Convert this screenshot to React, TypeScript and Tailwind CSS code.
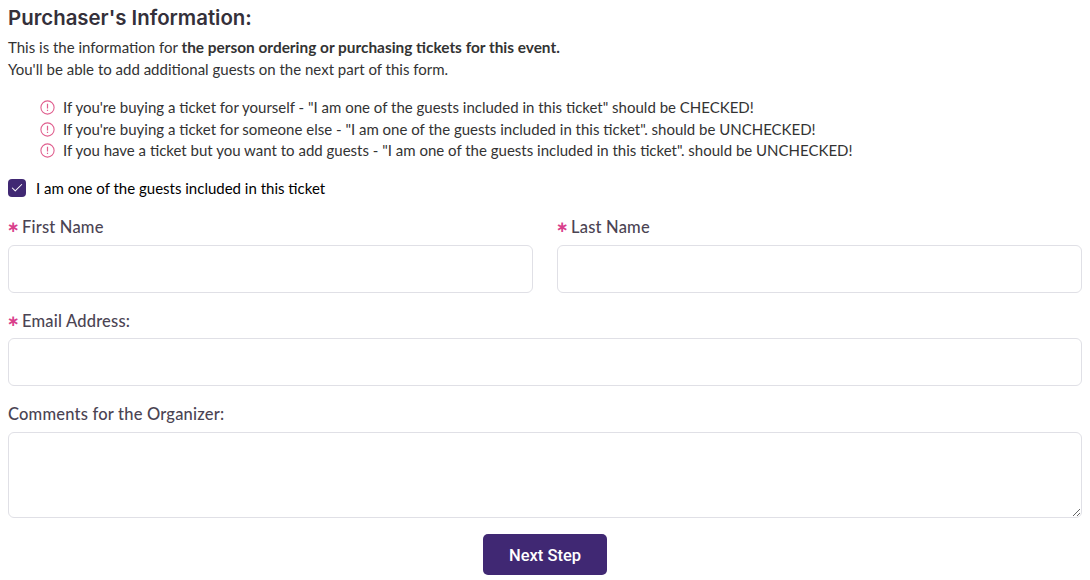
import { Check } from "lucide-react";

const notes = [
  `If you're buying a ticket for yourself - "I am one of the guests included in this ticket" should be CHECKED!`,
  `If you're buying a ticket for someone else - "I am one of the guests included in this ticket". should be UNCHECKED!`,
  `If you have a ticket but you want to add guests - "I am one of the guests included in this ticket". should be UNCHECKED!`,
];

function Alert() {
  return (
    <svg width="15" height="15" viewBox="0 0 15 15" fill="none" className="shrink-0">
      <circle cx="7.5" cy="7.5" r="6.6" stroke="#e0608f" strokeWidth="1.1" />
      <path d="M7.5 3.8v4.6M7.5 9.8v1.2" stroke="#e0608f" strokeWidth="1.2" />
    </svg>
  );
}

function Label({ text, required }: { text: string; required?: boolean }) {
  return (
    <div className="flex items-center h-[20px] text-[16.5px] tracking-[0.2px] font-medium text-[#4b4453]">
      {required && (
        <span className="w-[14px] -ml-[1px] mr-[1px] font-['DejaVu_Sans',sans-serif] text-[15px] font-bold leading-none text-[#d9408c]">∗</span>
      )}
      {text}
    </div>
  );
}

export default function App() {
  return (
    <div className="w-[1090px] h-[580px] overflow-hidden bg-white px-2 font-['Lato',sans-serif] text-[#333]">
      <h1 className="pt-[6px] font-['Inter',sans-serif] text-[20.4px] leading-[24px] font-semibold text-[#34303a]">Purchaser's Information:</h1>
      <p className="mt-[6px] text-[15px] leading-[22px]">
        This is the information for <b className="text-[15.4px]">the person ordering or purchasing tickets for this event.</b>
        <br />
        You'll be able to add additional guests on the next part of this form.
      </p>
      <ul className="mt-[17px] pl-[32px] flex flex-col">
        {notes.map((n) => (
          <li key={n} className="flex items-center gap-2 text-[15px] leading-[21.5px]">
            <Alert />
            {n}
          </li>
        ))}
      </ul>
      <label className="mt-[16px] flex items-center gap-[10px] text-[15px] leading-[20px] text-black">
        <span className="w-[18px] h-[18px] rounded-[4px] bg-[#402873] flex items-center justify-center">
          <Check size={14} color="white" strokeWidth={1.75} />
        </span>
        I am one of the guests included in this ticket
      </label>
      <div className="mt-[20px] grid grid-cols-2 gap-x-6">
        <div>
          <Label text="First Name" required />
          <input className="mt-[7px] block w-full h-[48px] rounded-[6px] border border-[#e0e0e6]" />
        </div>
        <div>
          <Label text="Last Name" required />
          <input className="mt-[7px] block w-full h-[48px] rounded-[6px] border border-[#e0e0e6]" />
        </div>
      </div>
      <div className="mt-[19px]">
        <Label text="Email Address:" required />
        <input className="mt-[6px] block w-full h-[48px] rounded-[6px] border border-[#e0e0e6]" />
      </div>
      <div className="mt-[19px]">
        <Label text="Comments for the Organizer:" />
        <textarea className="mt-[7px] block w-full h-[86px] rounded-[6px] border border-[#e0e0e6]" />
      </div>
      <div className="mt-[16px] flex justify-center">
        <button className="w-[124px] h-[41px] pt-[4px] rounded-[5px] bg-[#402873] font-['Roboto',sans-serif] text-white text-[16.5px] font-medium">Next Step</button>
      </div>
    </div>
  );
}
